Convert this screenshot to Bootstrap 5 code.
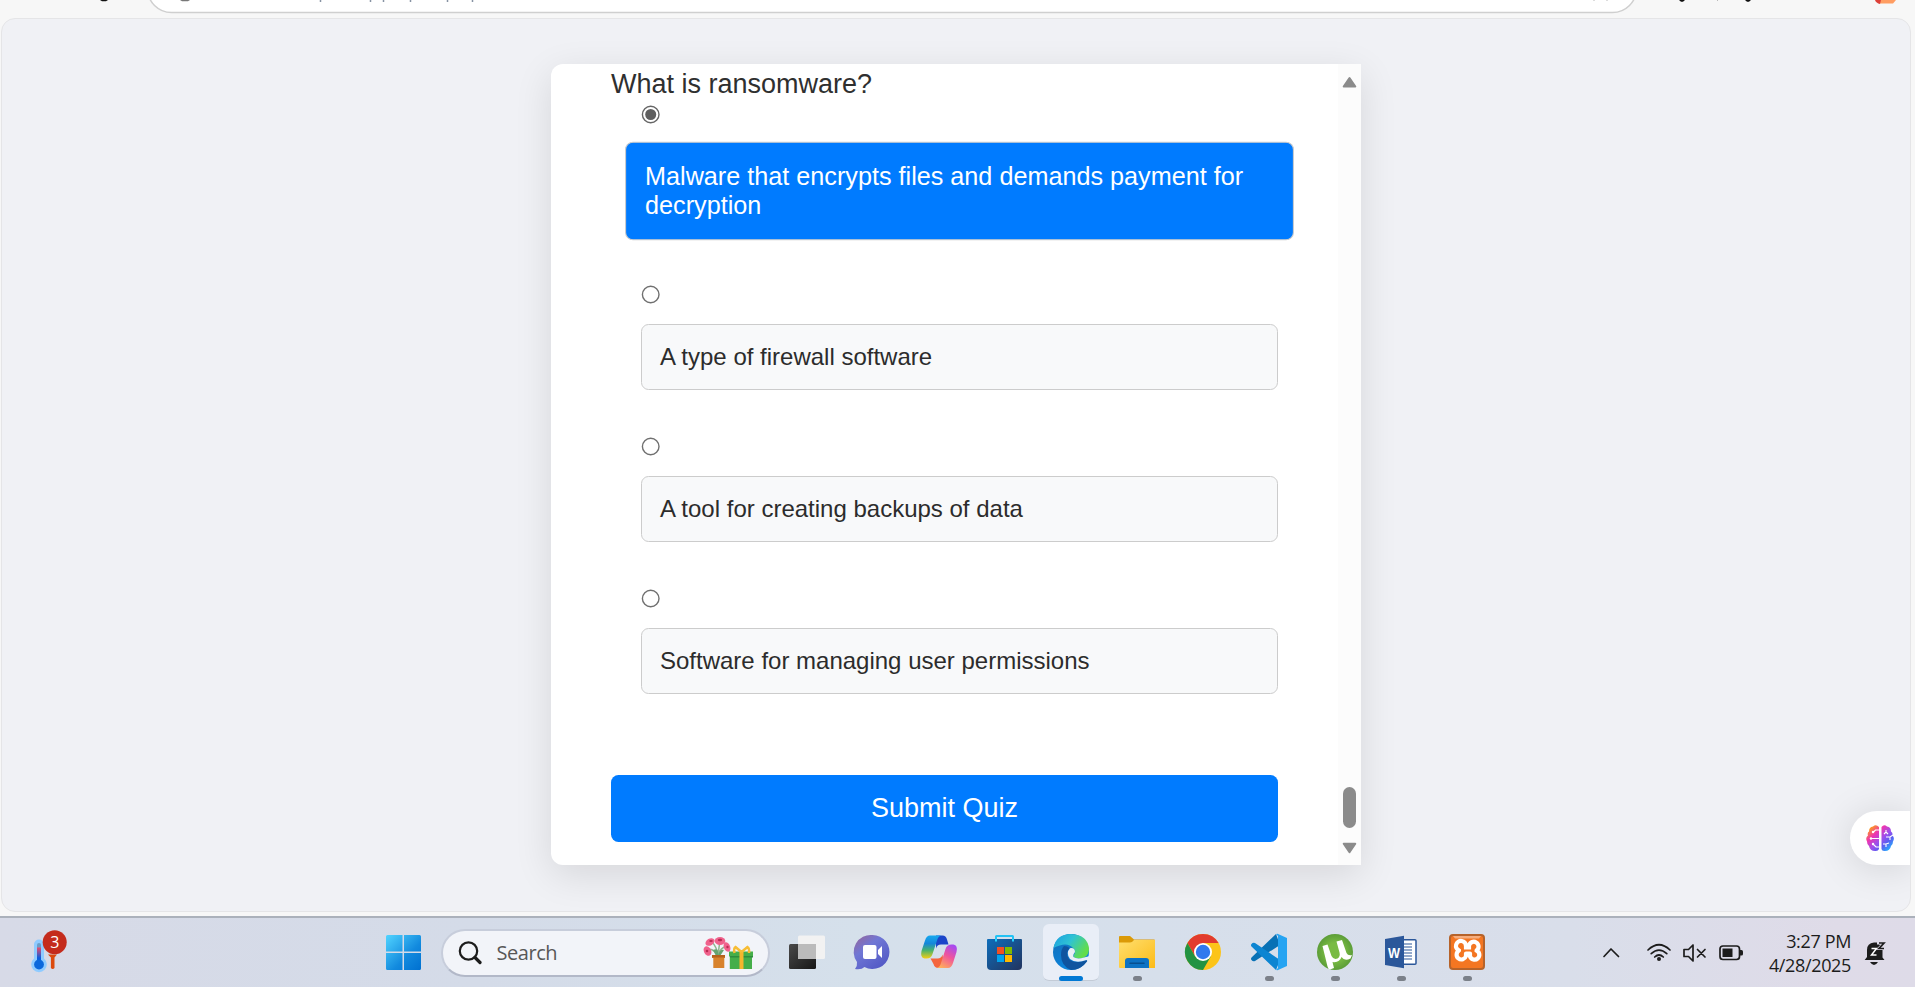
<!DOCTYPE html>
<html lang="en">
<head>
<meta charset="utf-8">
<title>Quiz</title>
<link href="https://cdn.jsdelivr.net/npm/bootstrap@5.3.0/dist/css/bootstrap.min.css" rel="stylesheet">
<style>
body{width:1915px;height:987px;overflow:hidden;background:#f7f7f7;font-family:"Liberation Sans",Arial,sans-serif;color:#2f2f2f}
svg{display:block;flex:none}
.chrome-top{height:18px}
.viewport-pane{height:894px;width:1910px;margin-left:1px;background:#f0f1f5;border:1px solid #e5e5e7;border-radius:14px;padding-top:45px}
.quiz-card{width:810px;height:801px;margin-left:549px;background:#fff;border-radius:12px 0 0 12px;box-shadow:0 10px 38px rgba(0,0,0,.11)}
.quiz-body{width:787px;padding:5px 60px 0}
.question{font-size:27px;line-height:31px;height:36px}
.quiz-option{margin-left:30px;width:637px}
.opt{margin-top:20px;border:1px solid #ccc;border-radius:7.5px;background:#f8f9fa;padding:18.3px 18px;font-size:24px;line-height:27.5px;color:#2c2c2c;margin-bottom:47px}
.opt.chosen{background:#007bff;color:#fff;transform:scale(1.05)}
.submit-btn{display:block;height:67px;width:667px;background:#007bff;color:#fff;border:0;border-radius:7.5px;font-size:27px;line-height:31px;margin-top:81px}
.quiz-option:last-of-type .opt{margin-bottom:0}
.scroll-col{width:23px;background:#fcfcfc;padding:12px 0 11px}
.scroll-thumb{width:13px;height:41px;border-radius:7px;background:#8b8b8b;margin-bottom:14px}
.side-tab{position:absolute;left:1850px;top:811px;width:60px;height:54px;background:#fff;border-radius:27px 0 0 27px;box-shadow:0 3px 38px rgba(0,0,0,.13);clip-path:inset(-60px 0 -46px -60px);padding-left:16px}
.taskbar{position:absolute;left:0;top:916px;width:1915px;height:71px;border-top:2px solid #abb1bb;background:linear-gradient(90deg,#d7dae7 0,#d4dbe8 25%,#d5e0eb 45%,#d6dfeb 60%,#d9deea 82%,#dfdbe8 96%,#dedbe8)}
.weather{width:370px;padding-left:28px}
.cell{width:66px;height:69px}
.search-pill{width:329px;height:48px;margin:0 4px 0 5px;border-radius:24px;background:#f2f4f9;border:2px solid #c7cddb;border-bottom-color:#b2b8c8;padding:0 14px 0 15px}
.search-pill span{font:20px/28px "Open Sans",sans-serif;color:#575757;letter-spacing:-.45px;margin-left:14.5px}
.active-tile{width:56px;height:57px;background:#e9eef7;border-radius:6px;border-bottom:1px solid #c3cbd6}
.tray{padding-right:29px}
.clock{font:18px/24px "Open Sans",sans-serif;color:#1c1c1c;text-align:right;letter-spacing:-.35px;width:84px;margin:0 13px 0 9px}
</style>
<script src="https://cdn.jsdelivr.net/npm/bootstrap@5.3.0/dist/js/bootstrap.bundle.min.js"></script>
</head>
<body>
<header class="chrome-top">
<svg width="1915" height="18" viewBox="0 0 1915 18">
<rect x="147.500" y="-36" width="1489" height="48.500" rx="24" fill="#fff" stroke="#cfcfcf" stroke-width="1.500"/>
<path d="M100 0h8l-2 1.200h-4z" fill="#111"/><path d="M180 0h10l-2 1.200h-6z" fill="#777"/>
<path d="M320.500 0v2M370.500 0v2M383.500 0v2M410.500 0v2M447.500 0v2M472.500 0v2" stroke="#8793a3" stroke-width="1.500"/>
<path d="M1594 0v1M1607 0v1M1717.500 0v1" stroke="#bbb"/><path d="M1679 0h6l-2 1.800h-2zM1745 0h6l-2 1.800h-2z" fill="#111"/>
<path d="M1876 0h20l-3 3.500h-13z" fill="#ff9d62"/><path d="M1875 0h6l-1 4q-4-1-5-4z" fill="#dd4038"/>
</svg>
</header>
<main class="viewport-pane">
<div class="quiz-card d-flex">
<form class="quiz-body">
<div class="question">What is ransomware?</div>
<div class="quiz-option"><svg width="19" height="19" viewBox="0 0 19 19"><circle cx="9.700" cy="9.500" r="8.300" fill="#fff" stroke="#666" stroke-width="1.400"/><circle cx="9.700" cy="9.500" r="5.500" fill="#5f5f5f"/></svg><div class="opt chosen">Malware that encrypts files and demands payment for decryption</div></div>
<div class="quiz-option"><svg width="19" height="19" viewBox="0 0 19 19"><circle cx="9.700" cy="9.500" r="8.300" fill="#fff" stroke="#707070" stroke-width="1.400"/></svg><div class="opt">A type of firewall software</div></div>
<div class="quiz-option"><svg width="19" height="19" viewBox="0 0 19 19"><circle cx="9.700" cy="9.500" r="8.300" fill="#fff" stroke="#707070" stroke-width="1.400"/></svg><div class="opt">A tool for creating backups of data</div></div>
<div class="quiz-option"><svg width="19" height="19" viewBox="0 0 19 19"><circle cx="9.700" cy="9.500" r="8.300" fill="#fff" stroke="#707070" stroke-width="1.400"/></svg><div class="opt">Software for managing user permissions</div></div>
<button type="button" class="submit-btn">Submit Quiz</button>
</form>
<div class="scroll-col d-flex flex-column align-items-center">
<svg width="15" height="12" viewBox="0 0 15 12"><path d="M7.500 2 13.300 10.500H1.700z" fill="#8b8b8b" stroke="#8b8b8b" stroke-width="2" stroke-linejoin="round"/></svg>
<div class="scroll-thumb mt-auto"></div>
<svg width="15" height="12" viewBox="0 0 15 12"><path d="M7.500 10.300 13.300 1.800H1.700z" fill="#8b8b8b" stroke="#8b8b8b" stroke-width="2" stroke-linejoin="round"/></svg>
</div>
</div>
</main>
<aside class="side-tab d-flex align-items-center">
<svg width="28" height="27" viewBox="0 0 28 27">
<defs><linearGradient id="br" x1="0" y1="0" x2="1" y2="1"><stop offset=".08" stop-color="#ffae00"/><stop offset=".33" stop-color="#ee35b0"/><stop offset=".55" stop-color="#9b50ed"/><stop offset=".7" stop-color="#5c5df0"/><stop offset=".92" stop-color="#20b8ff"/></linearGradient></defs>
<path d="M13 2Q10-1 7 1.500Q3 2 3 6.500Q1 8 2 10.500Q-1 13 1 16.500Q1 20 3 21Q4 26 9 26Q12 26.500 13 24zM15.500 2Q18-1 21 1.500Q25 2 25 6.500Q27 8 26.500 10.500Q29 13 27 16.500Q27 20 25 21Q24 26 19 26Q16 26.500 15.500 24z" fill="url(#br)"/>
<path d="M13 5H9.500L7 7.500M13 13.500H4.500M13 22H10L7 19M18 9l2-2 2 2M20 7V5M20 12l4 0 3-2M24 12v3M17 19l3 0 3-1M20 19v3" fill="none" stroke="#fff" stroke-width="1.100"/><circle cx="7" cy="7" r="1.200" fill="#fff"/><circle cx="5" cy="13.500" r="1.200" fill="#fff"/><circle cx="7" cy="19" r="1.200" fill="#fff"/>
</svg>
</aside>
<footer class="taskbar d-flex align-items-center">
<svg width="0" height="0" class="position-absolute"><defs>
<linearGradient id="th" x1="0" y1="0" x2="0" y2="1"><stop stop-color="#ef4b68"/><stop offset=".7" stop-color="#0b5cdd"/></linearGradient>
<linearGradient id="wn" x1="0" y1="0" x2="1" y2="1"><stop stop-color="#51d4ff"/><stop offset=".6" stop-color="#128ade"/><stop offset="1" stop-color="#0070d0"/></linearGradient>
<linearGradient id="dk" x1="0" y1="0" x2="1" y2="1"><stop stop-color="#4a4a4a"/><stop offset="1" stop-color="#161616"/></linearGradient>
<linearGradient id="ch" x1="0" y1="0" x2=".8" y2="1"><stop stop-color="#9a6596"/><stop offset=".4" stop-color="#7077d5"/><stop offset="1" stop-color="#5057c4"/></linearGradient>
<linearGradient id="c1" x1="0" y1="0" x2="0" y2="1"><stop stop-color="#16a9ef"/><stop offset=".35" stop-color="#1686d9"/><stop offset=".65" stop-color="#4bb36a"/><stop offset="1" stop-color="#f5ce13"/></linearGradient>
<linearGradient id="c2" x1=".7" y1="0" x2=".2" y2="1"><stop stop-color="#a84af0"/><stop offset=".45" stop-color="#f0559b"/><stop offset="1" stop-color="#ffb15a"/></linearGradient>
<linearGradient id="st" x1="0" y1="0" x2="1" y2="1"><stop stop-color="#0e6ebb"/><stop offset="1" stop-color="#22335e"/></linearGradient>
<linearGradient id="e1" x1="0" y1="0" x2="1" y2=".5"><stop stop-color="#1b9de2"/><stop offset=".5" stop-color="#2fc3d3"/><stop offset="1" stop-color="#62dd4a"/></linearGradient>
<linearGradient id="e2" x1="0" y1="0" x2=".5" y2="1"><stop stop-color="#136cb5"/><stop offset="1" stop-color="#0b86df"/></linearGradient>
<linearGradient id="fo" x1="0" y1="0" x2="1" y2="1"><stop stop-color="#ffdf6e"/><stop offset="1" stop-color="#fcbb18"/></linearGradient>
<radialGradient id="ut"><stop offset=".5" stop-color="#79bb43"/><stop offset="1" stop-color="#5c9d38"/></radialGradient>
</defs></svg>
<div class="weather"><svg width="44" height="50" viewBox="28 924 44 50">
<path d="M34 940.500a5 5 0 0 1 10 0V954.500a7.800 7.800 0 1 1-10 0z" fill="#8fcbff"/><path d="M37 941a2 2 0 0 1 4 0v16h-4z" fill="#6b9dc8"/><path d="M37 943.500h4v15h-4z" fill="url(#th)"/><circle cx="39" cy="960.500" r="4.900" fill="#0b68dc"/>
<path d="M48 950.500h9l-2.500 3v10.500q-1.800 1.800-3.600 0v-10.500z" fill="#dc4a0d"/><circle cx="54.700" cy="938.300" r="12" fill="#c42b1c"/><text x="50.300" y="944.200" font-family="Open Sans" font-size="16" fill="#fff">3</text></svg></div>
<div class="cell d-flex align-items-center justify-content-center"><svg width="35" height="35" viewBox="0 0 35 35"><path d="M1.500 0H16.500V16.500H0V1.500Q0 0 1.500 0M18 0H33.500Q35 0 35 1.500V16.500H18zM0 18H16.500V35H1.500Q0 35 0 33.500zM18 18H35V33.500Q35 35 33.500 35H18z" fill="url(#wn)"/></svg></div>
<div class="search-pill d-flex align-items-center">
<svg width="24" height="24" viewBox="0 0 24 24"><circle cx="10.500" cy="10" r="8.700" fill="none" stroke="#1c1c1c" stroke-width="2.200"/><path d="M17 16.500l5 5" stroke="#1c1c1c" stroke-width="3.200" stroke-linecap="round"/></svg>
<span>Search</span>
<svg class="ms-auto" width="51" height="34" viewBox="703 935 51 34">
<path d="M718 954q-7-8-10-5M718 954q-1-8-7-14M718 954q1-8 2-14M718 954q3-9 9-8" fill="none" stroke="#8fb58e" stroke-width="1.500"/><path d="M713 949q6-3 5 5 2-6 6-5l-4 6h-4z" fill="#65a371"/>
<g fill="#f0618c"><ellipse cx="710" cy="941" rx="4.900" ry="3.400" transform="rotate(-30 710 941)"/><ellipse cx="720" cy="940" rx="5.300" ry="4"/><ellipse cx="707.500" cy="950" rx="3.600" ry="5" transform="rotate(-25 707.500 950)"/><ellipse cx="727" cy="946" rx="3.200" ry="5" transform="rotate(-20 727 946)"/></g>
<g fill="#b92b53"><ellipse cx="720" cy="939" rx="2.200" ry="1.200"/><ellipse cx="711" cy="940" rx="1.800" ry="1"/><circle cx="707" cy="950" r="1.300"/><circle cx="727.500" cy="946" r="1.200"/></g>
<path d="M712 954h13v3h-.7v10h-11v-10H712z" fill="#d8822c"/><path d="M712 954h13v2.500h-13z" fill="#b5611c"/>
<path d="M730 950.500h23v5h-1V968h-22.200v-12.500h-.8v-5z" fill="#45ae4a"/><path d="M730 955h23v1.500h-23z" fill="#2f8c3d"/><path d="M739.500 950h4v18h-4z" fill="#f6b62d"/><path d="M741.500 951l-6-5q-2 1-1 6M741.500 951l6-5q2 1 1.500 6" fill="none" stroke="#f7bd35" stroke-width="2.500"/></svg>
</div>
<div class="cell"><svg width="66" height="69" viewBox="774 918 66 69"><rect x="789" y="944" width="27" height="25" rx="1.500" fill="url(#dk)"/><rect x="798" y="935.500" width="27" height="23.500" rx="1.500" fill="#f2f2f2"/><path d="M798 944h18v15h-18z" fill="#bbb"/></svg></div>
<div class="cell"><svg width="66" height="69" viewBox="840 918 66 69"><path d="M872.500 935a17 17 0 1 1-8 32q-3 3-9.500 2 2.500-3 2-7a17 17 0 0 1 15.500-27" fill="url(#ch)"/><rect x="863" y="945" width="13.500" height="14" rx="2" fill="#fff"/><path d="M878 950l4-4v12l-4-4z" fill="#fff"/></svg></div>
<div class="cell"><svg width="66" height="69" viewBox="906 918 66 69">
<path d="M936 935.500h6.500q3.500 0 4.500 4l1.500 5h-7.500q-4 0-5 4z" fill="#1b45c9"/><path d="M944.500 968h-6q-4 0-5-4l-3-5.500h7q4 0 5-4z" fill="#f4653d"/>
<path d="M930 935.500h11q-3 1-4 5l-4.500 13.500q-1.300 4.500-6 4.500h-2Q920 958 921.500 951l3.500-10.500q1.500-5 5-5" fill="url(#c1)"/><path d="M948 968h-11q3-1 4-5l4.500-14q1.300-4.500 6-4.500h2Q958 945 956.500 952l-3.500 11q-1.500 5-5 5" fill="url(#c2)"/></svg></div>
<div class="cell"><svg width="66" height="69" viewBox="972 918 66 69"><path d="M996 941v-4.500q0-.5.500-.5h16q.5 0 .5.500v4.500" fill="none" stroke="#24c2f4" stroke-width="2"/><path d="M987 940q0-1 1-1h33q1 0 1 1v26q0 4-4 4h-27q-4 0-4-4z" fill="url(#st)"/><path d="M996 939v2.500M1013 939v2.500" stroke="#24d2ff" stroke-width="2"/><path d="M997 947h7v7h-7z" fill="#f25022"/><path d="M1005 947h7v7h-7z" fill="#7fba00"/><path d="M997 955h7v7h-7z" fill="#00a4ef"/><path d="M1005 955h7v7h-7z" fill="#ffb900"/></svg></div>
<div class="cell d-flex align-items-center justify-content-center"><div class="active-tile"><svg width="56" height="57" viewBox="1043 924 56 57">
<circle cx="1071" cy="952" r="18" fill="url(#e2)"/>
<path d="M1053.500 948Q1056 934 1071 934Q1088 935 1089 949Q1089 958 1079 958.500Q1073 958 1073.500 955.500Q1077 951 1073 948Q1067 941 1053.500 948" fill="url(#e1)"/>
<path d="M1064 946Q1067.500 946 1069.500 948Q1065 954 1069 959Q1075 964.500 1086 960Q1088 960 1087 961.500Q1081 970 1071 970Q1061 966 1061 955Q1061 949 1064 946" fill="#0f549f"/>
<path d="M1070 948.200Q1075 947.500 1075 952Q1072.500 955 1073.500 957Q1077 959.500 1084 957.500L1090 956V962L1086.500 960Q1076 964 1070 959Q1065.500 953 1070 948.200" fill="#e9eef7"/>
<rect x="1059" y="976" width="24" height="5" rx="2.500" fill="#0078d4"/></svg></div></div>
<div class="cell"><svg width="66" height="69" viewBox="1104 918 66 69"><path d="M1119 937q0-1 1-1h10l4 3.500h20q1 0 1 1v6h-36z" fill="#db9a07"/><path d="M1119 942.500h11q2 0 4-2.500h21v28h-35q-1 0-1-1z" fill="url(#fo)"/><path d="M1125 968v-7q0-3 3-3h18q3 0 3 3v7z" fill="#0d72c4"/><path d="M1130 963.300h14" stroke="#074f90" stroke-width="1.500" stroke-linecap="round"/><rect x="1133" y="976" width="9" height="5" rx="2.500" fill="#7b8089"/></svg></div>
<div class="cell"><svg width="66" height="69" viewBox="1170 918 66 69"><circle cx="1203" cy="952" r="18" fill="#fcc419"/><path d="M1187.400 943A18 18 0 0 1 1218.600 943H1203L1195.200 956.500z" fill="#e23b2e"/><path d="M1187.400 943A18 18 0 0 0 1203 970L1210.800 956.500H1195.200z" fill="#229342"/><circle cx="1203" cy="952" r="9" fill="#fff"/><circle cx="1203" cy="952" r="7.200" fill="#3079ee"/></svg></div>
<div class="cell"><svg width="66" height="69" viewBox="1236 918 66 69"><path d="M1251.500 957.500 1276 934l4 11-25 16q-2 1-3.500-1-1-1 0-2.500" fill="#0871b5"/><path d="M1251.500 946.500q-1-1.500 0-2.500 1.500-2 3.500-1l25 17-4 10z" fill="#0c85d2"/><path d="M1276 934l1.500-.2L1287 938v28l-9.500 4.200-1.500-.2 2-2V936z" fill="#26a4f2"/><rect x="1265" y="976" width="9" height="5" rx="2.500" fill="#7b8089"/></svg></div>
<div class="cell"><svg width="66" height="69" viewBox="1302 918 66 69"><circle cx="1335" cy="952" r="18" fill="url(#ut)"/><path d="M1322.500 946l5-1.500 4 11.500q2 4 6 2.500 3-2 2-6l-3-11 5.500-1.500 4.500 13q1.500 3 5.500 2l-1.500 3.500q-6 3-9-1.500-2 6-9 5l1.500 6-4 1.500q-2-.5-2.500-3z" fill="#fff"/><rect x="1331" y="976" width="9" height="5" rx="2.500" fill="#7b8089"/></svg></div>
<div class="cell"><svg width="66" height="69" viewBox="1368 918 66 69"><rect x="1402" y="939.700" width="14" height="24.500" rx="1" fill="#fff" stroke="#2b579a" stroke-width="1.500"/><path d="M1403 944h9M1403 947h9M1403 950h9M1403 953h9M1403 956h9M1403 959h9" stroke="#2b579a" stroke-width="1.200"/><path d="M1385 939l19-3.200v32.400L1385 965z" fill="#2b579a"/><text x="1388" y="957.500" font-family="Liberation Sans" font-weight="700" font-size="15" textLength="12" lengthAdjust="spacingAndGlyphs" fill="#fff">W</text><rect x="1397" y="976" width="9" height="5" rx="2.500" fill="#7b8089"/></svg></div>
<div class="cell"><svg width="66" height="69" viewBox="1434 918 66 69"><rect x="1450" y="935" width="34" height="34" rx="3" fill="#f47622" stroke="#b6632a" stroke-width="2"/><path d="M1453 936h28l-2 2.500h-24z" fill="#f6ad7d"/><path d="M1466 949.500V946a5 5 0 1 0-7 4.500 4.800 4.800 0 1 0 7 5.500v-2.500h4v3a4.800 4.800 0 1 0 6.500-6A4.800 4.800 0 1 0 1469 946v3.500" fill="none" stroke="#fff" stroke-width="4.200" stroke-linejoin="round"/><rect x="1463" y="976" width="9" height="5" rx="2.500" fill="#7b8089"/></svg></div>
<div class="tray d-flex align-items-center ms-auto">
<svg width="160" height="30" viewBox="1598 937 160 30"><g fill="none" stroke="#1c1c1c" stroke-width="1.700" stroke-linecap="round" stroke-linejoin="round">
<path d="M1604 955.500l7-7.500 7.500 7.500"/><path d="M1648 949q11-10.500 22 0M1651.200 952.700q7.800-7.200 15.600 0M1654.700 956q4.300-4 8.600 0"/><path d="M1684 948.500h4.500l4.500-4.500v16l-4.500-4.500h-4.500zM1697.500 948.500l7.500 7.500M1705 948.500l-7.500 7.500"/><rect x="1720" y="945" width="19.500" height="13.500" rx="3"/></g><circle cx="1659" cy="958" r="2" fill="#1c1c1c"/><rect x="1722.500" y="947.500" width="10" height="8.500" fill="#1c1c1c"/><path d="M1740 949h1.500q1.500 0 1.500 1.500v2.500q0 1.500-1.500 1.500h-1.500z" fill="#1c1c1c"/></svg>
<div class="clock"><div>3:27 PM</div><div>4/28/2025</div></div>
<svg width="22" height="26" viewBox="1864 939 22 26"><path d="M1867 956v-7q0-7 7-7.500h3v2h5.500v13l2 2.500h-19.800z" fill="#1c1c1c"/><path d="M1870 961h8q-2 3-4 3t-4-3" fill="#1c1c1c"/><path d="M1871.500 947.500h5l-5 6.500h5" fill="none" stroke="#fff" stroke-width="1.500"/><path d="M1879 942h5l-5 5.500h5" fill="none" stroke="#dfdbe8" stroke-width="3"/><path d="M1879 942h5l-5 5.500h5" fill="none" stroke="#1c1c1c" stroke-width="1.700"/></svg>
</div>
</footer>
</body>
</html>
